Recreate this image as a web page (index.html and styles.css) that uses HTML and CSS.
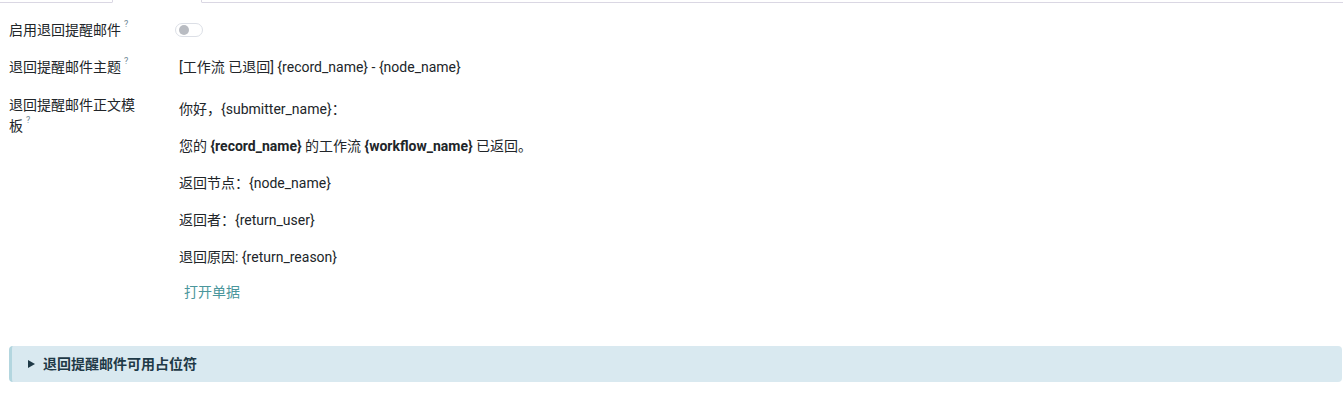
FILE: index.html
```html
<!DOCTYPE html>
<html lang="zh-CN">
<head>
  <meta charset="UTF-8">
  <meta name="viewport" content="width=device-width, initial-scale=1.0">
  <title>退回提醒邮件</title>
  <link rel="stylesheet" href="styles.css">
</head>
<body>
  <div class="tabs">
    <div class="tab"></div>
    <div class="tab active"></div>
    <div class="tab-rest"></div>
  </div>

  <div class="sheet">
    <div class="form-grid">
      <div class="label">启用退回提醒邮件<sup>?</sup></div>
      <div class="value">
        <span class="switch"><span class="knob"></span></span>
      </div>

      <div class="label">退回提醒邮件主题<sup>?</sup></div>
      <div class="value">[工作流 已退回] {record_name} - {node_name}</div>

      <div class="label tall">退回提醒邮件正文模板<sup>?</sup></div>
      <div class="value body-tpl">
        <p>你好，{submitter_name}：</p>
        <p>您的 <b>{record_name}</b> 的工作流 <b>{workflow_name}</b> 已返回。</p>
        <p>返回节点：{node_name}</p>
        <p>返回者：{return_user}</p>
        <p>退回原因: {return_reason}</p>
        <a class="open-link" href="#">打开单据</a>
      </div>
    </div>

    <div class="info-box">
      <span class="caret"></span>
      <span>退回提醒邮件可用占位符</span>
    </div>
  </div>
</body>
</html>
```

FILE: styles.css
```css
body {
  margin: 0;
  font-family: Roboto, "Noto Sans CJK SC", sans-serif;
  font-size: 14px;
  line-height: 21px;
  color: #212529;
  background: #fff;
}

.tabs {
  display: flex;
  height: 3px;
}

.tab {
  width: 112px;
  border-bottom: 1px solid #dad7e3;
}

.tab.active {
  width: 88px;
  border: 1px solid #dad7e3;
  border-top: none;
  border-bottom-color: #fff;
}

.tab-rest {
  flex: 1;
  border-bottom: 1px solid #dad7e3;
}

.sheet {
  padding: 17px 1px 0 9px;
}

.form-grid {
  display: grid;
  grid-template-columns: 135px 1fr;
  column-gap: 35px;
  row-gap: 16px;
}

.label.tall {
  padding-top: 1px;
}

.label sup {
  font-size: 9px;
  line-height: 9px;
  color: #6f8796;
  margin-left: 3px;
  vertical-align: top;
}

.switch {
  display: inline-block;
  width: 26px;
  height: 12px;
  margin: 3px 0 0 -4px;
  border: 1px solid #dcdfe6;
  border-radius: 8px;
  position: relative;
  vertical-align: top;
}

.knob {
  position: absolute;
  left: 3px;
  top: 1px;
  width: 10px;
  height: 10px;
  border-radius: 50%;
  background: #b9bcc2;
}

.body-tpl {
  padding-top: 5px;
}

.body-tpl p {
  margin: 0 0 16px;
}

.body-tpl b {
  font-weight: 700;
}

.open-link {
  display: block;
  width: fit-content;
  margin: -2px 0 0 5px;
  color: #4a969c;
  text-decoration: none;
}

.info-box {
  box-sizing: border-box;
  margin-top: 43px;
  height: 36px;
  padding: 0 16px;
  display: flex;
  align-items: center;
  gap: 8px;
  background: #d9e9f0;
  border-left: 3px solid #b3d6df;
  border-radius: 4px;
  color: #1f3a47;
  font-weight: 700;
}

.caret {
  width: 0;
  height: 0;
  border-left: 7px solid #1f3a47;
  border-top: 4px solid transparent;
  border-bottom: 4px solid transparent;
}
```
